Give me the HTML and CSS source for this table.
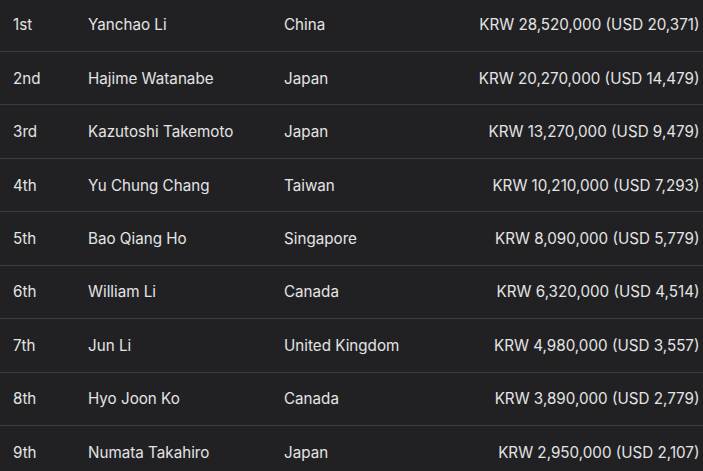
FILE: index.html
```html
<!DOCTYPE html>
<html>
<head>
<meta charset="utf-8">
<link rel="stylesheet" href="styles.css">
</head>
<body>
<div class="table">
  <div class="row"><span class="rank">1st</span><span class="name">Yanchao Li</span><span class="country">China</span><span class="prize">KRW 28,520,000 (USD 20,371)</span></div>
  <div class="row"><span class="rank">2nd</span><span class="name">Hajime Watanabe</span><span class="country">Japan</span><span class="prize">KRW 20,270,000 (USD 14,479)</span></div>
  <div class="row"><span class="rank">3rd</span><span class="name">Kazutoshi Takemoto</span><span class="country">Japan</span><span class="prize">KRW 13,270,000 (USD 9,479)</span></div>
  <div class="row"><span class="rank">4th</span><span class="name">Yu Chung Chang</span><span class="country">Taiwan</span><span class="prize">KRW 10,210,000 (USD 7,293)</span></div>
  <div class="row"><span class="rank">5th</span><span class="name">Bao Qiang Ho</span><span class="country">Singapore</span><span class="prize">KRW 8,090,000 (USD 5,779)</span></div>
  <div class="row"><span class="rank">6th</span><span class="name">William Li</span><span class="country">Canada</span><span class="prize">KRW 6,320,000 (USD 4,514)</span></div>
  <div class="row"><span class="rank">7th</span><span class="name">Jun Li</span><span class="country">United Kingdom</span><span class="prize">KRW 4,980,000 (USD 3,557)</span></div>
  <div class="row"><span class="rank">8th</span><span class="name">Hyo Joon Ko</span><span class="country">Canada</span><span class="prize">KRW 3,890,000 (USD 2,779)</span></div>
  <div class="row"><span class="rank">9th</span><span class="name">Numata Takahiro</span><span class="country">Japan</span><span class="prize">KRW 2,950,000 (USD 2,107)</span></div>
</div>
</body>
</html>
```
FILE: styles.css
```css
html, body {
  margin: 0;
  padding: 0;
  background: #212124;
  overflow: hidden;
}
body {
  font-family: Inter, "Noto Sans", sans-serif;
  font-size: 15.2px;
  color: #e4e4e4;
}
.table {
  margin-top: -1.4px;
}
.row {
  display: grid;
  grid-template-columns: 75px 196px 1fr auto;
  align-items: center;
  box-sizing: border-box;
  height: 53.43px;
  padding: 0 3.5px 0 13px;
  border-bottom: 1px solid #3c3c40;
}
.prize {
  text-align: right;
}
```
